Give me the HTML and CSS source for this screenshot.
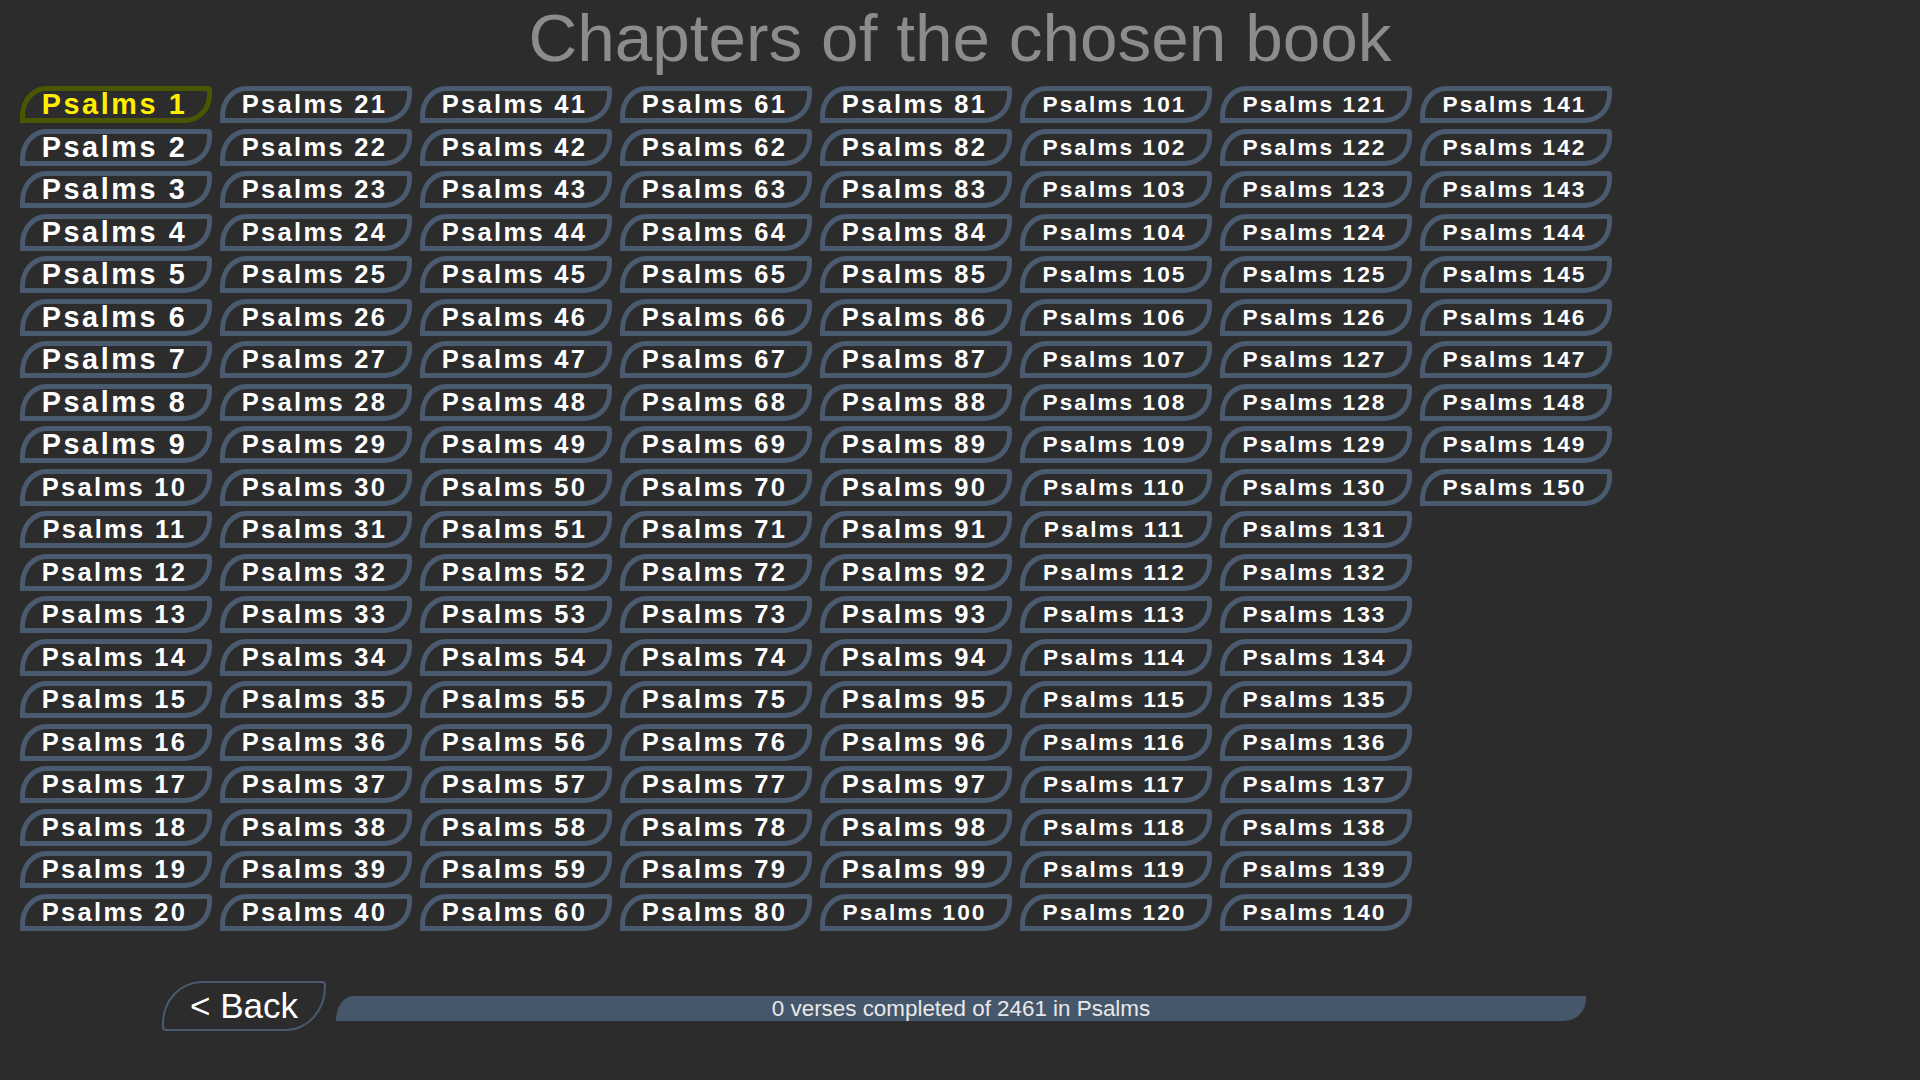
FILE: index.html
```html
<!DOCTYPE html>
<html lang="en">
<head>
  <meta charset="UTF-8">
  <title>Chapters</title>
  <link rel="stylesheet" href="styles.css">
</head>
<body>

<h1 class="title">Chapters of the chosen book</h1>

<!-- chapter buttons, filled by the script below -->
<div id="chapters" class="chapters"></div>

<div class="footer">
  <div class="back-btn">&lt; Back</div>
  <div class="progress">0 verses completed of 2461 in Psalms</div>
</div>

<script>
  const grid = document.getElementById('chapters');
  const book = "Psalms";
  const total = 150;
  let selected = 1;

  for (let i = 1; i <= total; i++) {
    const btn = document.createElement('div');
    btn.className = 'chapter';
    if (i >= 100) btn.classList.add('small');
    else if (i >= 10) btn.classList.add('medium');
    else btn.classList.add('large');
    if (i === selected) btn.classList.add('selected');
    btn.textContent = book + " " + i;
    btn.addEventListener('click', () => {
      grid.querySelector('.selected').classList.remove('selected');
      btn.classList.add('selected');
      selected = i;
    });
    grid.appendChild(btn);
  }
</script>

</body>
</html>
```

FILE: styles.css
```css
body {
  margin: 0;
  background: #2c2c2c;
  font-family: "Liberation Sans", Arial, sans-serif;
  width: 1920px;
  height: 1080px;
  overflow: hidden;
}

.title {
  margin: 4px 0 0;
  font-size: 67.5px;
  line-height: 68px;
  font-weight: normal;
  color: #8c8c8c;
  text-align: center;
}

.chapters {
  display: grid;
  grid-template-rows: repeat(20, 37px);
  grid-auto-flow: column;
  grid-auto-columns: 192px;
  column-gap: 8px;
  row-gap: 5.5px;
  margin: 14px 0 0 20px;
}

.chapter {
  box-sizing: border-box;
  height: 37px;
  border: 5px solid #4a5a6f;
  border-radius: 26px 4px 27px 0 / 30px 4px 28px 0;
  display: flex;
  align-items: center;
  justify-content: center;
  padding-right: 3px;
  color: #fff;
  font-weight: bold;
  font-size: 25.5px;
  letter-spacing: 0.09em;
  white-space: nowrap;
  cursor: pointer;
}

.chapter.large {
  font-size: 28.8px;
}

.chapter.small {
  font-size: 22.7px;
}

.chapter.selected {
  border-color: #4c5500;
  color: #ffee00;
}

.footer {
  display: flex;
  align-items: flex-start;
  margin-top: 50.5px;
  padding-left: 162px;
}

.back-btn {
  box-sizing: border-box;
  width: 164px;
  height: 50px;
  border: 2px solid #4a5a6f;
  border-radius: 40px 4px 40px 4px / 42px 4px 44px 4px;
  display: flex;
  align-items: center;
  justify-content: center;
  color: #fff;
  font-size: 35px;
  cursor: pointer;
}

.progress {
  width: 1250px;
  height: 25px;
  margin: 15px 0 0 10px;
  background: #47576b;
  border-radius: 18px 0 22px 0 / 24px 0 22px 0;
  color: #e8e8e8;
  font-size: 22.4px;
  line-height: 25px;
  text-align: center;
}
```
